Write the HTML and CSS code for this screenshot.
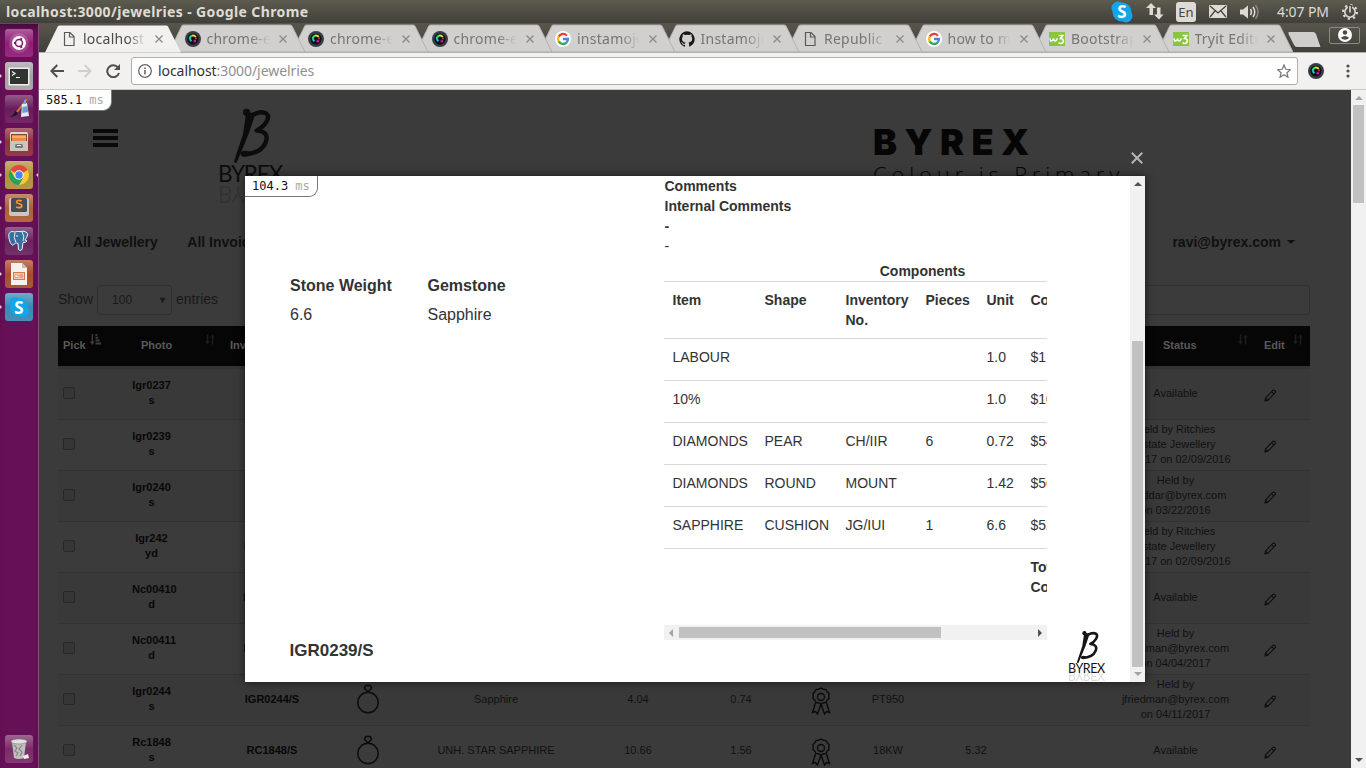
FILE: index.html
```html
<!DOCTYPE html>
<html lang="en">
<head>
<meta charset="utf-8">
<title>localhost:3000/jewelries</title>
<link rel="stylesheet" href="styles.css">
</head>
<body>
<svg class="defs" aria-hidden="true">
  <defs>
    <linearGradient id="tile" x1="0" y1="0" x2="0" y2="1"><stop offset="0" stop-color="#fff" stop-opacity=".28"/><stop offset=".5" stop-color="#fff" stop-opacity="0"/><stop offset="1" stop-color="#fff" stop-opacity=".06"/></linearGradient>
    <symbol id="i-file" viewBox="0 0 16 16"><path d="M3.500 1.500h5.500l4 4v9h-9.500zM8.500 1.500v4.500h4.500" fill="none" stroke="#5a5a5a" stroke-width="1.200"/></symbol>
    <symbol id="i-lens" viewBox="0 0 16 16"><circle cx="8" cy="8" r="8" fill="#3a3d45"/><circle cx="8" cy="8" r="5.600" fill="#101115"/><path d="M4.700 7.800a3.400 3.400 0 0 1 2.500-3" stroke="#18e06a" stroke-width="2" fill="none"/><path d="M7 4.700a3.500 3.500 0 0 1 3.800 1.300" stroke="#e8e032" stroke-width="1.800" fill="none"/><path d="M4.900 7.500a3.500 3.500 0 0 0 1.600 2.700" stroke="#18c8f0" stroke-width="2" fill="none"/><path d="M11 6.500v1.800" stroke="#e8402a" stroke-width="1.600"/><path d="M8.500 10.400h1.600v-1.600" stroke="#d018b0" stroke-width="1.700" fill="none"/></symbol>
    <symbol id="i-google" viewBox="0 0 16 16"><circle cx="8" cy="8" r="8" fill="#fff"/><g fill="none" stroke-width="2.300"><path d="M11.900 4.700A5 5 0 0 0 3.700 5.600" stroke="#ea4335"/><path d="M3.700 5.500a5 5 0 0 0 0 5" stroke="#fbbc05"/><path d="M3.700 10.400a5 5 0 0 0 7.800 1.200" stroke="#34a853"/><path d="M8 8h5a5 5 0 0 1-1.600 3.700" stroke="#4285f4"/></g></symbol>
    <symbol id="i-github" viewBox="0 0 16 16"><path fill="#191717" d="M8 .2a8 8 0 0 0-2.500 15.500c.4.1.5-.2.500-.4v-1.500c-2.200.500-2.700-1-2.700-1-.4-1-.9-1.200-.9-1.200-.7-.500.1-.500.1-.500.8.1 1.200.8 1.200.8.7 1.300 1.900.9 2.400.7.100-.500.300-.9.500-1.100-1.800-.2-3.600-.9-3.600-4 0-.9.300-1.600.8-2.100-.1-.2-.4-1 .1-2.100 0 0 .7-.2 2.200.8a7.600 7.600 0 0 1 4 0c1.500-1 2.200-.8 2.200-.8.400 1.100.2 1.900.1 2.100.500.600.8 1.300.8 2.100 0 3.100-1.900 3.700-3.700 3.900.3.300.6.8.6 1.500v2.300c0 .2.100.500.600.4A8 8 0 0 0 8 .2z"/></symbol>
    <symbol id="i-w3" viewBox="0 0 16 14"><rect width="16" height="14" fill="#8ac53e"/><path d="M1 6.300q.300 2.700 1.500 2.700T4.700 6.500q.200 2.500 1.500 2.500t2.200-2.700" fill="none" stroke="#fff" stroke-width="1.500"/><path d="M9.500 3.500h4.300L11.500 6.500q3 .200 2.900 2.500t-2.500 2.500q-1.500 0-2.200-1" fill="none" stroke="#fff" stroke-width="1.600"/></symbol>
    <symbol id="i-x" viewBox="0 0 8 8"><path d="M.5.5l7 7M7.500.5l-7 7" fill="none" stroke="currentColor" stroke-width="1.300"/></symbol>
    <symbol id="i-sort" viewBox="0 0 12 12"><path d="M3 0v10M9 12V2" stroke="currentColor" stroke-width="2"/><path d="M0 8.500h6L3 12zM6 3.500h6L9 0z" fill="currentColor"/></symbol>
    <symbol id="i-sortasc" viewBox="0 0 12 12"><path d="M2.500 0v9" stroke="currentColor" stroke-width="1.500"/><path d="M0 8.300h5L2.500 12zM6 0h2v2.300H6zM6 3h3v2.300H6zM6 6h4.500v2.300H6zM6 9.200h6v2.300H6z" fill="currentColor"/></symbol>
    <symbol id="i-pen" viewBox="0 0 14 14"><path d="M1 13l.7-3.500 7.800-8q1-.9 2.200.3t.3 2.200l-7.800 8zM8.300 2.800l2.700 2.700M1.800 9.800l2.400 2.400" fill="none" stroke="#0c0c0c" stroke-width="1.100" stroke-linejoin="round"/></symbol>
    <symbol id="i-ring" viewBox="0 0 24 30"><g fill="none" stroke="#0b0b0b" stroke-width="1.400"><circle cx="12" cy="18.500" r="10.200"/><path d="M8.300 4L10 1.500h4L15.700 4 12 8z" stroke-linejoin="round"/></g></symbol>
    <symbol id="i-ribbon" viewBox="0 0 20 28"><g fill="none" stroke="#0b0b0b" stroke-width="1.400"><circle cx="10" cy="10" r="3.500"/><path d="M10 1.200l2.400 1 2.600.3 1.100 2.300 2 1.700-.4 2.500.4 2.500-2 1.700-1.100 2.300-2.600.3-2.400 1-2.400-1-2.600-.3-1.100-2.300-2-1.700.4-2.500L1.900 6.500l2-1.700L5 2.500l2.600-.3z" stroke-linejoin="round"/><path d="M4.500 16L1.500 25.500l3-1 2 2.500L10 17M15.500 16l3 9.500-3-1-2 2.500L10 17"/></g></symbol>
    <symbol id="i-scriptb" viewBox="657 320 192 168"><path d="M738 340l30-5-23 68-36 86-8-3 28-84z"/><path d="M740 336q6 13 19 8 24-14 41-4c12 12-4 37-30 51 26 1 35 15 27 35-10 24-34 35-65 35" fill="none" stroke="currentColor" stroke-width="13" stroke-linecap="round" stroke-linejoin="round"/><circle cx="740" cy="336" r="11"/><ellipse cx="735" cy="460" rx="14" ry="9"/></symbol>
  </defs>
</svg>

<div class="menubar">
  <span class="menubar-title">localhost:3000/jewelries - Google Chrome</span>
  <div class="tray">
    <svg width="22" height="22" viewBox="0 0 22 22"><circle cx="7" cy="7" r="6.500" fill="#12a5ea"/><circle cx="15" cy="15" r="6.500" fill="#12a5ea"/><circle cx="11" cy="11" r="9.500" fill="#12a5ea"/><text x="11" y="17" text-anchor="middle" class="skype-s">S</text></svg>
    <svg width="18" height="17" viewBox="0 0 18 17" fill="#dfdbd2"><path d="M5 0l5 5H7v7H3.500V5H0zM13 16.500l-5-5h3v-7h3.500v7h3z"/></svg>
    <span class="lang">En</span>
    <svg width="18" height="13" viewBox="0 0 18 13"><rect width="18" height="13" rx="1" fill="#dfdbd2"/><path d="M1 1l8 7 8-7M1 12l5-6M17 12l-5-6" fill="none" stroke="#46453f" stroke-width="1.300"/></svg>
    <svg width="20" height="16" viewBox="0 0 20 16"><path d="M0 5.500h3L8 1.500v13L3 10.500H0z" fill="#dfdbd2"/><path d="M10.500 5q2 3 0 6M13 3q3.500 5 0 10" fill="none" stroke="#dfdbd2" stroke-width="1.500"/><path d="M15.500 1q5 7 0 14" fill="none" stroke="#88867e" stroke-width="1.500"/></svg>
    <span class="clock">4:07 PM</span>
    <svg width="16" height="16" viewBox="0 0 16 16" fill="none" stroke="#dfdbd2"><circle cx="8" cy="8" r="5.200" stroke-width="1.600"/><circle cx="8" cy="8" r="7" stroke-width="2" stroke-dasharray="2.200 3.300"/><path d="M8 1v6.500" stroke="#4a4943" stroke-width="4"/><path d="M8 2v6.500" stroke-width="1.600"/></svg>
  </div>
</div>

<div class="desktop">
  <div class="launcher">
    <div class="launch"><svg viewBox="0 0 28 28"><rect width="28" height="28" rx="3" fill="#8f1f76"/><rect width="28" height="28" rx="3" fill="url(#tile)"/><circle cx="14" cy="14" r="10" fill="#fff" opacity=".15"/><circle cx="14" cy="14" r="7" fill="#fff"/><circle cx="14" cy="14" r="3.500" fill="none" stroke="#7c1c68" stroke-width="1.500"/><path d="M9 14h2M15.700 10.700l1-1.700M15.700 17.300l1 1.700" stroke="#7c1c68" stroke-width="2"/></svg></div>
    <div class="launch run"><svg viewBox="0 0 28 28"><rect width="28" height="28" rx="3" fill="#a5a1a5"/><rect width="28" height="28" rx="3" fill="url(#tile)"/><rect x="3.500" y="5.500" width="21" height="18" rx="1" fill="#eee"/><rect x="5" y="7" width="18" height="15" fill="#30332f"/><path d="M7 9.500l3 2-3 2M11 15.500h4" fill="none" stroke="#fff" stroke-width="1.200"/></svg></div>
    <div class="launch"><svg viewBox="0 0 28 28"><rect width="28" height="28" rx="3" fill="#691c5c"/><rect width="28" height="28" rx="3" fill="url(#tile)"/><path d="M22 4L12 17" stroke="#c57a2c" stroke-width="2"/><path d="M4 22q5-1 6-6l3 2q-2 4-9 4z" fill="#191919"/><path d="M17 9l5-1 2 13-8 1z" fill="#e6e9ee"/><path d="M17.500 12l5-1 .8 6-6 1z" fill="#6f9cd0"/><path d="M19 5h2v4h-2z" fill="#68a8d8"/></svg></div>
    <div class="launch run"><svg viewBox="0 0 28 28"><rect width="28" height="28" rx="3" fill="#8c303c"/><rect width="28" height="28" rx="3" fill="url(#tile)"/><rect x="5" y="4" width="18" height="19" rx="1.500" fill="#ddd9d3"/><rect x="6" y="6" width="16" height="7" fill="#864b24"/><path d="M7 7h14v6H7z" fill="#f08848"/><path d="M7 9h14" stroke="#fbd4a8"/><rect x="5" y="13" width="18" height="10" fill="#c9c6c2"/><rect x="10" y="16" width="8" height="4" rx="1.500" fill="#777"/><path d="M12 17h4v1h-4z" fill="#eee"/></svg></div>
    <div class="launch run active"><svg viewBox="0 0 28 28"><rect width="28" height="28" rx="3" fill="#b0923c"/><rect width="28" height="28" rx="3" fill="url(#tile)"/><circle cx="14" cy="14" r="10" fill="#fcc934"/><path d="M14 14L5.300 9A10 10 0 0 1 22.700 9z" fill="#e04a3c"/><path d="M5.300 9A10 10 0 0 0 14 24l4.300-7.500L14 14 9.700 16.500z" fill="#27a05a"/><circle cx="14" cy="14" r="4.700" fill="#fff"/><circle cx="14" cy="14" r="3.700" fill="#4285f4"/></svg></div>
    <div class="launch run"><svg viewBox="0 0 28 28"><rect width="28" height="28" rx="3" fill="#b05f33"/><rect width="28" height="28" rx="3" fill="url(#tile)"/><rect x="4" y="4" width="20" height="18" rx="2" fill="#c9c6c3"/><rect x="6" y="4" width="16" height="14" rx="1.500" fill="#4a4c4d"/><path d="M16.800 7q-5-1.500-5.300 1c0 2.300 5.300 1.200 5.300 3.700 0 2.300-3.700 2.300-5.600 1.300" fill="none" stroke="#ff9632" stroke-width="1.700"/></svg></div>
    <div class="launch"><svg viewBox="0 0 28 28"><rect width="28" height="28" rx="3" fill="#692560"/><rect width="28" height="28" rx="3" fill="url(#tile)"/><path d="M10 5c-5-1.500-7 1-6 6 .6 4 2.500 8 4.500 7l2-2q1 0 2.500.5l.5 6q1.500 2 3.500 0l1-7q3 0 4-1.500l-2-1q4.500-6 1-8-3-1.500-6-.3-2-.8-5 .3z" fill="#35709f" stroke="#f2f4f6" stroke-width="1"/><path d="M10 5.500q-2 5 1 10M17 5q3 4 1 9" fill="none" stroke="#e9eef3" stroke-width="1"/><circle cx="12" cy="9" r=".8" fill="#fff"/></svg></div>
    <div class="launch run"><svg viewBox="0 0 28 28"><rect width="28" height="28" rx="3" fill="#a94d2a"/><rect width="28" height="28" rx="3" fill="url(#tile)"/><path d="M6 3h11l5 5v17H6z" fill="#f4f1ee"/><path d="M17 3v5h5z" fill="#c8bdb8"/><rect x="8.500" y="12.500" width="11" height="7" fill="#f3c9b4" stroke="#d9774c"/><path d="M10 15h3v2.500h-3z" fill="#fff" stroke="#d9774c" stroke-width=".6"/><path d="M14.500 15h3.500M14.500 17h3.500" stroke="#d9774c"/></svg></div>
    <div class="launch run"><svg viewBox="0 0 28 28"><rect width="28" height="28" rx="3" fill="#3a88b5"/><rect width="28" height="28" rx="3" fill="url(#tile)"/><circle cx="10" cy="10" r="6" fill="#12a5ea"/><circle cx="18" cy="18" r="6" fill="#12a5ea"/><circle cx="14" cy="14" r="9" fill="#12a5ea"/><text x="14" y="20.500" text-anchor="middle" class="skype-s">S</text></svg></div>
    <div class="launch trash"><svg viewBox="0 0 28 28"><rect width="28" height="28" rx="3" fill="#7a2c68"/><rect width="28" height="28" rx="3" fill="url(#tile)"/><path d="M7 7l2 16q5 2 10 0l2-16z" fill="#bfc0bd"/><path d="M9 10l3 3-2 3 3 2-2 3M17 10l-3 4 3 3-2 4" stroke="#868885" stroke-width="1.200" fill="none"/><ellipse cx="14" cy="6.500" rx="8" ry="2.500" fill="#e1e2df" stroke="#7b7d7a" stroke-width=".6"/><path d="M18 21l5-2 1 4-5 1z" fill="#eee"/></svg></div>
  </div>

  <div class="browser">
    <div class="tabstrip">
      <div class="tab on"><svg class="tab-bg" viewBox="0 0 136 28"><path d="M0 28L13 1.500Q13.500 1 15 1H121Q122.500 1 123 2L136 28z"/></svg><svg class="fav"><use href="#i-file"/></svg><span class="tab-t">localhost:3</span><svg class="tab-x"><use href="#i-x"/></svg></div>
      <div class="tab"><svg class="tab-bg" viewBox="0 0 136 28"><path d="M0 28L13 1.500Q13.500 1 15 1H121Q122.500 1 123 2L136 28z"/></svg><svg class="fav"><use href="#i-lens"/></svg><span class="tab-t">chrome-ext</span><svg class="tab-x"><use href="#i-x"/></svg></div>
      <div class="tab"><svg class="tab-bg" viewBox="0 0 136 28"><path d="M0 28L13 1.500Q13.500 1 15 1H121Q122.500 1 123 2L136 28z"/></svg><svg class="fav"><use href="#i-lens"/></svg><span class="tab-t">chrome-ext</span><svg class="tab-x"><use href="#i-x"/></svg></div>
      <div class="tab"><svg class="tab-bg" viewBox="0 0 136 28"><path d="M0 28L13 1.500Q13.500 1 15 1H121Q122.500 1 123 2L136 28z"/></svg><svg class="fav"><use href="#i-lens"/></svg><span class="tab-t">chrome-ext</span><svg class="tab-x"><use href="#i-x"/></svg></div>
      <div class="tab"><svg class="tab-bg" viewBox="0 0 136 28"><path d="M0 28L13 1.500Q13.500 1 15 1H121Q122.500 1 123 2L136 28z"/></svg><svg class="fav"><use href="#i-google"/></svg><span class="tab-t">instamojo</span><svg class="tab-x"><use href="#i-x"/></svg></div>
      <div class="tab"><svg class="tab-bg" viewBox="0 0 136 28"><path d="M0 28L13 1.500Q13.500 1 15 1H121Q122.500 1 123 2L136 28z"/></svg><svg class="fav"><use href="#i-github"/></svg><span class="tab-t">Instamojo</span><svg class="tab-x"><use href="#i-x"/></svg></div>
      <div class="tab"><svg class="tab-bg" viewBox="0 0 136 28"><path d="M0 28L13 1.500Q13.500 1 15 1H121Q122.500 1 123 2L136 28z"/></svg><svg class="fav"><use href="#i-file"/></svg><span class="tab-t">Republic</span><svg class="tab-x"><use href="#i-x"/></svg></div>
      <div class="tab"><svg class="tab-bg" viewBox="0 0 136 28"><path d="M0 28L13 1.500Q13.500 1 15 1H121Q122.500 1 123 2L136 28z"/></svg><svg class="fav"><use href="#i-google"/></svg><span class="tab-t">how to ma</span><svg class="tab-x"><use href="#i-x"/></svg></div>
      <div class="tab"><svg class="tab-bg" viewBox="0 0 136 28"><path d="M0 28L13 1.500Q13.500 1 15 1H121Q122.500 1 123 2L136 28z"/></svg><svg class="fav"><use href="#i-w3"/></svg><span class="tab-t">Bootstrap</span><svg class="tab-x"><use href="#i-x"/></svg></div>
      <div class="tab"><svg class="tab-bg" viewBox="0 0 136 28"><path d="M0 28L13 1.500Q13.500 1 15 1H121Q122.500 1 123 2L136 28z"/></svg><svg class="fav"><use href="#i-w3"/></svg><span class="tab-t">Tryit Edito</span><svg class="tab-x"><use href="#i-x"/></svg></div>
      <svg class="newtab" width="33" height="15" viewBox="0 0 33 15"><path d="M1 0h24q2 0 3 2l4.500 13H9q-2 0-3-2L.5 2Q0 0 1 0z" fill="#d0cecc"/></svg>
      <div class="profile"><svg width="14" height="14" viewBox="0 0 14 14"><circle cx="7" cy="7" r="7" fill="#fff"/><circle cx="7" cy="4.500" r="2.200" fill="#4b4a43"/><path d="M2.800 10q4.200-4 8.400 0-4.200 3.500-8.400 0z" fill="#4b4a43"/></svg></div>
    </div>
    <div class="toolbar">
      <svg class="tb" width="14" height="14" viewBox="0 0 14 14"><path d="M14 7H1.500M7.300 1L1.300 7l6 6" fill="none" stroke="#4f4f4f" stroke-width="2"/></svg>
      <svg class="tb" width="14" height="14" viewBox="0 0 14 14"><path d="M0 7h12.500M6.700 1l6 6-6 6" fill="none" stroke="#d0cfce" stroke-width="2"/></svg>
      <svg class="tb" width="14" height="14" viewBox="0 0 14 14"><path d="M12 3.500A6 6 0 1 0 13 9" fill="none" stroke="#4f4f4f" stroke-width="2"/><path d="M14 0v6H8z" fill="#4f4f4f"/></svg>
      <div class="omnibox">
        <svg width="14" height="14" viewBox="0 0 14 14" fill="none" stroke="#666"><circle cx="7" cy="7" r="6.300" stroke-width="1.300"/><path d="M7 6v4.500M7 3.500v1.500" stroke-width="1.600"/></svg>
        <span class="url">localhost<i>:3000/jewelries</i></span>
        <svg class="star" width="14" height="14" viewBox="0 0 14 14"><path d="M7 1l1.800 4.300 4.600.4-3.500 3 1.100 4.600-4-2.500-4 2.500 1.100-4.600-3.500-3 4.600-.4z" fill="none" stroke="#777" stroke-width="1.200"/></svg>
      </div>
      <svg class="ext" width="16" height="16"><use href="#i-lens"/></svg>
      <svg class="dots" width="4" height="14" viewBox="0 0 4 14" fill="#4f4f4f"><circle cx="2" cy="2" r="1.600"/><circle cx="2" cy="7" r="1.600"/><circle cx="2" cy="12" r="1.600"/></svg>
    </div>

    <div class="viewport">
      <div class="page">
        <div class="speed">585.1 <i>ms</i></div>
        <div class="head">
          <div class="burger"><b></b><b></b><b></b></div>
          <div class="logo"><svg class="logo-b"><use href="#i-scriptb"/></svg><span class="logo-t">BYREX</span><span class="logo-t mirror">BYREX</span></div>
          <div class="brand"><div class="brand-name">BYREX</div><div class="brand-tag">Colour is Primary</div></div>
        </div>
        <div class="nav"><span>All Jewellery</span><span>All Invoices</span><span class="user">ravi@byrex.com <b class="caret"></b></span></div>
        <div class="filter"><span>Show</span><div class="select">100<em>▼</em></div><span>entries</span><div class="search"></div></div>
        <div class="list">
          <div class="lhead"><div class="h-pick">Pick<svg class="so lit"><use href="#i-sortasc"/></svg></div><div class="h-photo">Photo<svg class="so"><use href="#i-sort"/></svg></div><div class="h-inv">Inv No.</div><div class="h-status">Status<svg class="so"><use href="#i-sort"/></svg></div><div class="h-edit">Edit<svg class="so"><use href="#i-sort"/></svg></div></div>
          <div class="row"><div><i class="cb"></i></div><div class="b ph">Igr0237<br>s</div><div class="b">IGR0237/S</div><div></div><div></div><div></div><div></div><div></div><div></div><div></div><div></div><div>Available</div><div class="ed"><svg><use href="#i-pen"/></svg></div></div>
          <div class="row"><div><i class="cb"></i></div><div class="b ph">Igr0239<br>s</div><div class="b">IGR0239/S</div><div></div><div></div><div></div><div></div><div></div><div></div><div></div><div></div><div>Held by Ritchies<br>Estate Jewellery<br>102917 on 02/09/2016</div><div class="ed"><svg><use href="#i-pen"/></svg></div></div>
          <div class="row"><div><i class="cb"></i></div><div class="b ph">Igr0240<br>s</div><div class="b">IGR0240/S</div><div></div><div></div><div></div><div></div><div></div><div></div><div></div><div></div><div>Held by<br>spoddar@byrex.com<br>on 03/22/2016</div><div class="ed"><svg><use href="#i-pen"/></svg></div></div>
          <div class="row"><div><i class="cb"></i></div><div class="b ph">Igr242<br>yd</div><div class="b">IGR242/YD</div><div></div><div></div><div></div><div></div><div></div><div></div><div></div><div></div><div>Held by Ritchies<br>Estate Jewellery<br>102917 on 02/09/2016</div><div class="ed"><svg><use href="#i-pen"/></svg></div></div>
          <div class="row"><div><i class="cb"></i></div><div class="b ph">Nc00410<br>d</div><div class="b">NC00410/D</div><div></div><div></div><div></div><div></div><div></div><div></div><div></div><div></div><div>Available</div><div class="ed"><svg><use href="#i-pen"/></svg></div></div>
          <div class="row"><div><i class="cb"></i></div><div class="b ph">Nc00411<br>d</div><div class="b">NC00411/D</div><div></div><div></div><div></div><div></div><div></div><div></div><div></div><div></div><div>Held by<br>jfriedman@byrex.com<br>on 04/04/2017</div><div class="ed"><svg><use href="#i-pen"/></svg></div></div>
          <div class="row"><div><i class="cb"></i></div><div class="b ph">Igr0244<br>s</div><div class="b">IGR0244/S</div><div><svg class="ring"><use href="#i-ring"/></svg></div><div>Sapphire</div><div>4.04</div><div>0.74</div><div><svg class="ribbon"><use href="#i-ribbon"/></svg></div><div>PT950</div><div></div><div></div><div>Held by<br>jfriedman@byrex.com<br>on 04/11/2017</div><div class="ed"><svg><use href="#i-pen"/></svg></div></div>
          <div class="row"><div><i class="cb"></i></div><div class="b ph">Rc1848<br>s</div><div class="b">RC1848/S</div><div><svg class="ring"><use href="#i-ring"/></svg></div><div>UNH. STAR SAPPHIRE</div><div>10.66</div><div>1.56</div><div><svg class="ribbon"><use href="#i-ribbon"/></svg></div><div>18KW</div><div>5.32</div><div></div><div>Available</div><div class="ed"><svg><use href="#i-pen"/></svg></div></div>
        </div>

        <svg class="close"><use href="#i-x"/></svg>
        <div class="modal">
          <div class="speed">104.3 <i>ms</i></div>
          <div class="m-left">
            <dl class="facts"><div><dt>Stone Weight</dt><dd>6.6</dd></div><div><dt>Gemstone</dt><dd>Sapphire</dd></div></dl>
            <div class="sku">IGR0239/S</div>
          </div>
          <div class="m-mid">
            <div class="notes"><b>Comments</b><b>Internal Comments</b><b>-</b><span>-</span></div>
            <div class="clip">
              <table class="parts">
                <caption>Components</caption>
                <colgroup><col class="c1"><col class="c2"><col class="c3"><col class="c4"><col class="c5"><col class="c6"></colgroup>
                <tr class="th"><th>Item</th><th>Shape</th><th>Inventory No.</th><th>Pieces</th><th>Unit</th><th>Cost</th></tr>
                <tr><td>LABOUR</td><td></td><td></td><td></td><td>1.0</td><td>$1 100</td></tr>
                <tr><td>10%</td><td></td><td></td><td></td><td>1.0</td><td>$1000</td></tr>
                <tr><td>DIAMONDS</td><td>PEAR</td><td>CH/IIR</td><td>6</td><td>0.72</td><td>$540</td></tr>
                <tr><td>DIAMONDS</td><td>ROUND</td><td>MOUNT</td><td></td><td>1.42</td><td>$568</td></tr>
                <tr><td>SAPPHIRE</td><td>CUSHION</td><td>JG/IUI</td><td>1</td><td>6.6</td><td>$5280</td></tr>
                <tr class="tf"><td></td><td></td><td></td><td></td><td></td><th>Total<br>Cost</th></tr>
              </table>
            </div>
            <div class="hbar"><i class="ar l"></i><i class="hthumb"></i><i class="ar r"></i></div>
          </div>
          <div class="m-logo"><div class="logo small"><svg class="logo-b"><use href="#i-scriptb"/></svg><span class="logo-t">BYREX</span><span class="logo-t mirror">BYREX</span></div></div>
          <div class="vbar inner"><i class="ar u"></i><i class="vthumb"></i><i class="ar d off"></i></div>
        </div>
      </div>
      <div class="vbar"><i class="ar u off"></i><i class="vthumb"></i><i class="ar d"></i></div>
    </div>
  </div>
</div>
</body>
</html>
```

FILE: styles.css
```css
* { box-sizing: border-box; }
html, body { margin: 0; height: 768px; overflow: hidden; }
body { font: 14px/20px "Liberation Sans", Arial, sans-serif; color: #333; display: flex; flex-direction: column; }
.defs { position: absolute; width: 0; height: 0; }
svg { display: block; flex: none; }
i, em { font-style: normal; }

.menubar { height: 24px; flex: none; display: flex; align-items: center; justify-content: space-between; padding: 0 8px 0 6px; background: linear-gradient(#5d5b4f, #403f3a); border-bottom: 1px solid #55534a; color: #dfdbd2; font-family: "Noto Sans", sans-serif; }
.menubar-title { font-weight: 700; font-size: 14px; letter-spacing: .38px; white-space: nowrap; }
.tray { display: flex; align-items: center; font-size: 14px; }
.tray svg:nth-child(1) { margin-right: 13px; }
.tray svg:nth-child(2) { margin-right: 12px; }
.lang { width: 20px; height: 20px; border-radius: 3px; background: #dfdbd2; color: #46453f; font-size: 13px; text-align: center; margin-right: 13px; }
.tray svg:nth-child(4) { margin-right: 13px; }
.tray svg:nth-child(5) { margin-right: 17px; }
.clock { width: 53px; margin-right: 12px; white-space: nowrap; letter-spacing: -.1px; }
.skype-s { font: 700 17px "Noto Sans", sans-serif; fill: #fff; }

.desktop { flex: 1; display: flex; min-height: 0; }
.launcher { width: 39px; flex: none; background: #651057; border-right: 1px solid #8b4a80; box-shadow: inset 0 8px 8px -6px #3a0a32; display: flex; flex-direction: column; gap: 5px; padding: 5px; }
.launch { width: 28px; height: 28px; position: relative; }
.launch svg { width: 28px; height: 28px; }
.launch.run::before { content: ""; position: absolute; left: -5px; top: 12px; border: 2.500px solid transparent; border-left-color: #dcc8d8; border-right: 0; }
.launch.active::after { content: ""; position: absolute; right: -5px; top: 12px; border: 2.500px solid transparent; border-right-color: #dcc8d8; border-left: 0; }
.trash { margin-top: auto; }

.browser { flex: 1; min-width: 0; display: flex; flex-direction: column; }
.tabstrip { height: 29px; flex: none; display: flex; padding-left: 6px; background: linear-gradient(#57554b, #403f3a); border-bottom: 1px solid #b3b1ae; font-family: "Noto Sans", sans-serif; }
.tab { width: 136px; height: 28px; flex: none; margin-right: -12.500px; display: flex; align-items: center; padding: 2px 17px 0 16px; position: relative; color: #777573; isolation: isolate; }
.tab-bg { position: absolute; left: 0; top: 0; width: 136px; height: 28px; z-index: -1; }
.tab-bg path { fill: #d2d0ce; stroke: #b3b1ae; stroke-width: 1; }
.tab.on .tab-bg path { fill: #f2f1f0; stroke: none; }
.tab.on { height: 29px; z-index: 20; color: #4a4a4a; padding-top: 1px; }
.tab.on .tab-bg { height: 29px; }
.tab:nth-child(2) { z-index: 9; } .tab:nth-child(3) { z-index: 8; } .tab:nth-child(4) { z-index: 7; } .tab:nth-child(5) { z-index: 6; } .tab:nth-child(6) { z-index: 5; } .tab:nth-child(7) { z-index: 4; } .tab:nth-child(8) { z-index: 3; } .tab:nth-child(9) { z-index: 2; } .tab:nth-child(10) { z-index: 1; }
.fav { width: 16px; height: 16px; }
.tab-t { width: 63px; margin-left: 6px; overflow: hidden; white-space: nowrap; font-size: 14px; letter-spacing: .25px; -webkit-mask-image: linear-gradient(90deg, #000 70%, transparent); mask-image: linear-gradient(90deg, #000 70%, transparent); }
.tab-x { width: 8px; height: 8px; margin-left: 9px; color: #8c8a88; }
.newtab { margin: 8px 0 0 8px; }
.profile { width: 31px; height: 17px; margin: 3px 0 0 8px; border: 1px solid #8b8a83; border-radius: 2px; display: flex; justify-content: center; }

.toolbar { height: 37px; flex: none; background: #f2f1f0; border-bottom: 1px solid #c9c8c5; display: flex; align-items: center; padding: 0 0 0 11px; }
.tb { margin-right: 14px; }
.omnibox { width: 1167px; height: 28px; margin-left: -3px; border: 1px solid #b0aeab; border-radius: 3px; background: #fff; display: flex; align-items: center; padding: 0 6px; font-family: "Noto Sans", sans-serif; color: #333; }
.url { margin-left: 6px; font-size: 14px; letter-spacing: -.07px; white-space: nowrap; }
.url i { color: #8f8f8f; }
.star { margin-left: auto; }
.ext { margin-left: 10px; }
.dots { margin-left: 22px; }

.viewport { flex: 1; min-height: 0; display: flex; }
.page { width: 1312px; position: relative; overflow: hidden; background: #3b3b3b; color: #101010; padding-left: 19px; }
.speed { position: absolute; left: 0; top: 0; z-index: 2; height: 21px; padding: 0 7px; background: #fff; color: #111; border: solid #777; border-width: 0 1px 1px 0; border-bottom-right-radius: 9px; font: 12px/20px "DejaVu Sans Mono", monospace; }
.speed i { color: #aaa; }

.head { height: 132px; display: flex; align-items: flex-start; padding-left: 35px; }
.burger { width: 25px; padding-top: 39px; display: flex; flex-direction: column; gap: 3px; }
.burger b { height: 4px; background: #090909; }
.logo { width: 64px; margin: 17px 0 0 101px; color: #0c0c0c; display: flex; flex-direction: column; }
.logo-b { width: 64px; height: 56px; fill: currentColor; }
.logo-t { font: 22.500px/22px Lato, sans-serif; letter-spacing: -1.100px; margin-left: -1px; height: 21px; white-space: nowrap; }
.mirror { transform: scaleY(-1); opacity: .15; }
.brand { margin-left: 590px; white-space: nowrap; color: #060606; }
.brand-name { font: 900 36px/36px Inter, sans-serif; letter-spacing: 7.500px; padding-top: 34px; }
.brand-tag { font: 300 22px/28px "Open Sans", sans-serif; letter-spacing: 4.850px; }

.nav { height: 40px; display: flex; align-items: center; gap: 29.500px; padding: 0 56px 0 15px; font-weight: 700; }
.user { margin-left: auto; display: flex; align-items: center; gap: 6px; }
.caret { border: 4px solid transparent; border-top-color: #101010; border-bottom: 0; }
.filter { display: flex; align-items: center; margin-top: 23px; width: 1252px; height: 30px; color: #191919; }
.filter span { margin-top: -2px; }
.select { width: 75px; height: 30px; margin: 0 4px; border: 1px solid #303030; border-radius: 3px; display: flex; align-items: center; justify-content: space-between; padding: 0 4px 0 14px; font-size: 12px; }
.select em { font-size: 9px; }
.search { margin-left: auto; width: 260px; height: 30px; border: 1px solid #303030; border-radius: 3px; }

.list { width: 1252px; margin-top: 11px; font-size: 11px; line-height: 15px; }
.lhead { height: 40px; background: #060606; color: #5a5a5a; font-weight: 700; display: flex; align-items: center; padding-bottom: 2px; }
.lhead > div { display: flex; align-items: center; }
.so { width: 10px; height: 11px; margin-bottom: 11px; color: #1d1d1d; }
.so.lit { color: #3c3c3c; width: 11px; }
.h-pick { width: 43px; padding-left: 5px; justify-content: space-between; }
.h-photo { width: 114px; padding-left: 40px; justify-content: space-between; }
.h-inv { padding-left: 15px; }
.h-status { margin-left: auto; width: 85px; justify-content: space-between; }
.h-edit { width: 62px; padding: 0 7px 0 16px; justify-content: space-between; }
.row { height: 51px; display: grid; grid-template-columns: 50px 88px 152px 40px 216px 68px 138px 22px 112px 64px 107px 121px 74px; align-items: center; text-align: center; border-top: 1px solid #323232; padding-bottom: 2px; color: #111; white-space: nowrap; }
.row > div { display: block; min-width: 0; }
.row:nth-child(even) { background: #393939; }
.lhead + .row { height: 53px; border-top: 3px solid #343434; }
.b { font-weight: 700; color: #080808; }
.row .ph { width: 39px; margin-left: 24px; }
.cb { display: block; width: 12px; height: 12px; margin-left: 5px; border: 1px solid #272727; border-radius: 2px; background: #363636; }
.row .ed { padding: 4px 0 0 28px; }
.ed svg { width: 13px; height: 13px; }
.ring { width: 24px; height: 30px; margin: 0 auto; }
.ribbon { width: 20px; height: 28px; margin: 3px auto 0; }

.close { position: absolute; left: 1092px; top: 62px; width: 12px; height: 12px; color: #b5b5b5; }
.modal { position: absolute; left: 206px; top: 86px; width: 900px; height: 506px; background: #fff; color: #333; display: flex; box-shadow: 0 0 8px rgba(0,0,0,.6); }
.m-left { width: 419px; flex: none; padding: 97px 0 19px 45px; display: flex; flex-direction: column; justify-content: space-between; font-size: 16px; line-height: 23px; }
.facts { display: flex; margin: 0; }
.facts div { width: 137.500px; flex: none; }
.facts dt { font-weight: 700; height: 29px; line-height: 25px; }
.facts dd { margin: 0; line-height: 25px; }
.sku { font-weight: 700; font-size: 17px; line-height: 24px; margin-left: -.500px; }
.m-mid { width: 383px; flex: none; }
.notes { height: 85px; display: flex; flex-direction: column; padding-left: .500px; }
.clip { overflow: hidden; height: 364px; }
.parts { width: 517px; border-collapse: collapse; table-layout: fixed; text-align: left; }
.parts caption { font-weight: 700; height: 20px; }
.c1 { width: 92px; } .c2 { width: 81px; } .c3 { width: 80px; } .c4 { width: 61px; } .c5 { width: 44px; } .c6 { width: 159px; }
.parts th, .parts td { padding: 8px 7.500px 8px 8.500px; vertical-align: top; border-top: 1px solid #d8d8d8; white-space: nowrap; }
.parts th:nth-child(3) { white-space: normal; }
.parts tr { height: 42px; }
.parts .th { height: 57px; }
.hbar { height: 15px; background: #f1f1f1; display: flex; align-items: center; }
.hthumb { width: 262px; height: 11px; background: #c1c1c1; margin-left: 3px; }
.ar { width: 0; height: 0; border: 4px solid transparent; flex: none; }
.ar.l { border-right: 4px solid #a3a3a3; border-left-width: 0; margin-left: 5px; margin-right: 3px; }
.ar.r { border-left: 4px solid #505050; border-right-width: 0; margin-left: auto; margin-right: 5px; }
.ar.u { border-bottom: 4px solid #505050; border-top-width: 0; margin-top: 6px; }
.ar.d { border-top: 4px solid #505050; border-bottom-width: 0; margin-top: auto; margin-bottom: 6px; }
.ar.u.off { border-bottom-color: #a3a3a3; }
.ar.d.off { border-top-color: #a3a3a3; }
.m-logo { flex: 1; display: flex; align-items: flex-end; overflow: hidden; }
.logo.small { width: 40px; margin: 0 0 1px 21px; color: #151515; }
.small .logo-b { width: 38px; height: 33px; }
.small .logo-t { font-size: 12.500px; height: 9px; line-height: 11px; letter-spacing: -.4px; margin-left: 0; }
.vbar { width: 15px; flex: none; background: #f1f1f1; display: flex; flex-direction: column; align-items: center; }
.vthumb { width: 11px; height: 98px; background: #c1c1c1; margin-top: 5px; }
.inner .vthumb { height: 326px; margin-top: 155px; }
```
